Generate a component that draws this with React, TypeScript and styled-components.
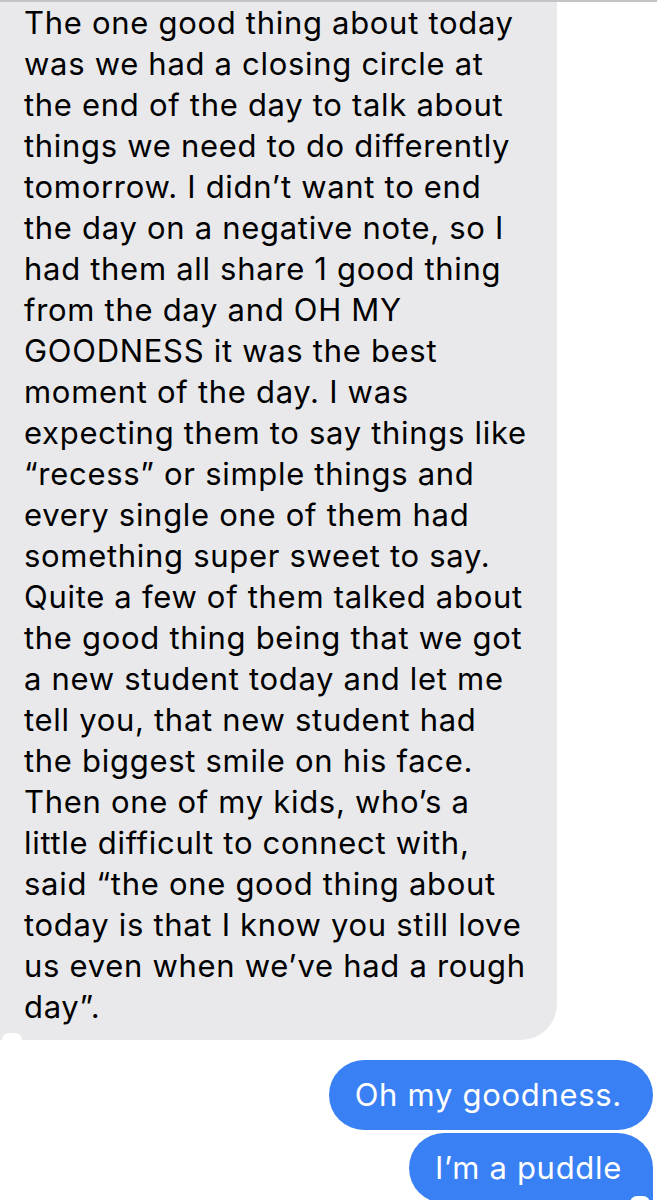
import React from "react";
import styled, { createGlobalStyle } from "styled-components";

const Global = createGlobalStyle`
  html, body {
    margin: 0;
    padding: 0;
    background: #ffffff;
  }
  body {
    font-family: Inter, "Noto Sans", "Liberation Sans", sans-serif;
    -webkit-font-smoothing: antialiased;
  }
`;

const Screen = styled.div`
  width: 657px;
  height: 1200px;
  overflow: hidden;
  background: #ffffff;
  display: flex;
  flex-direction: column;
`;

const TopRule = styled.div`
  height: 2px;
  flex: none;
  background: #c4c4c7;
`;

const Thread = styled.div`
  display: flex;
  flex-direction: column;
`;

const Bubble = styled.div<{ $sent?: boolean; $tail?: boolean; $cutTop?: boolean }>`
  position: relative;
  box-sizing: border-box;
  font-size: 31px;
  line-height: 41px;
  letter-spacing: 0.7px;
  color: ${(p) => (p.$sent ? "#ffffff" : "#000000")};
  background: ${(p) => (p.$sent ? "#3880f4" : "#e9e9eb")};
  align-self: ${(p) => (p.$sent ? "flex-end" : "flex-start")};
  border-radius: ${(p) =>
    p.$cutTop
      ? "0 0 36px 0"
      : p.$tail
      ? "35px 35px 0 35px"
      : "35px"};
  white-space: nowrap;

  ${(p) =>
    p.$tail &&
    `
    &::after {
      content: "";
      position: absolute;
      bottom: 0;
      ${p.$sent ? "right: 3px;" : "left: 2px;"}
      width: 20px;
      height: 7px;
      background: #ffffff;
      border-radius: 10px 10px 0 0;
    }
  `}
`;

const Received = styled(Bubble)`
  width: 557px;
  padding: 0 0 13px 24px;
`;

const Sent = styled(Bubble)`
  margin-right: 4px;
  padding: 14px 31px 15px 26px;
`;

const SentGroup = styled.div`
  display: flex;
  flex-direction: column;
  align-items: flex-end;
  gap: 3px;
  margin-top: 20px;
`;

const Line = styled.span`
  display: block;
`;

const lines = [
  "The one good thing about today",
  "was we had a closing circle at",
  "the end of the day to talk about",
  "things we need to do differently",
  "tomorrow. I didn\u2019t want to end",
  "the day on a negative note, so I",
  "had them all share 1 good thing",
  "from the day and OH MY",
  "GOODNESS it was the best",
  "moment of the day. I was",
  "expecting them to say things like",
  "\u201Crecess\u201D or simple things and",
  "every single one of them had",
  "something super sweet to say.",
  "Quite a few of them talked about",
  "the good thing being that we got",
  "a new student today and let me",
  "tell you, that new student had",
  "the biggest smile on his face.",
  "Then one of my kids, who\u2019s a",
  "little difficult to connect with,",
  "said \u201Cthe one good thing about",
  "today is that I know you still love",
  "us even when we\u2019ve had a rough",
  "day\u201D.",
];

export default function App() {
  return (
    <>
      <Global />
      <Screen>
        <TopRule />
        <Thread>
          <Received $cutTop $tail>
            {lines.map((l, i) => (
              <Line key={i}>{l}</Line>
            ))}
          </Received>
          <SentGroup>
            <Sent $sent>Oh my goodness.</Sent>
            <Sent $sent $tail>
              I{"\u2019"}m a puddle
            </Sent>
          </SentGroup>
        </Thread>
      </Screen>
    </>
  );
}
